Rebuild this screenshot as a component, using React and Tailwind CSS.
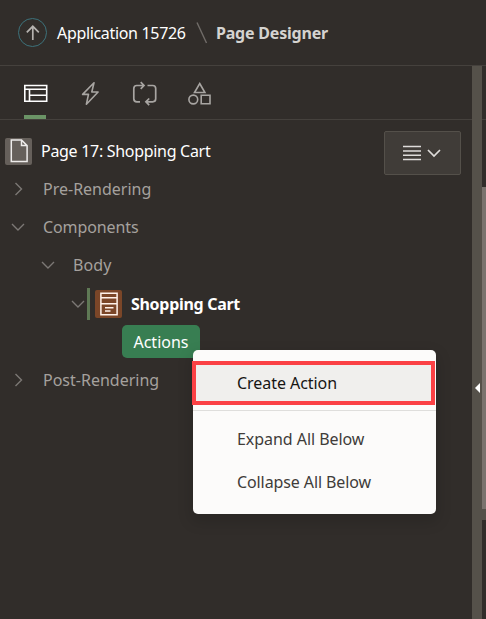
import React from 'react';

function Chevron({ open, className = '' }) {
  return (
    <svg width="16" height="16" viewBox="0 0 16 16" fill="none" stroke="currentColor" strokeWidth="1.4" className={`shrink-0 text-[#7c7875] ${className}`}>
      <path d={open ? 'M2 5l6 6 6-6' : 'M5.500 2l6 6-6 6'} />
    </svg>
  );
}

function Header() {
  return (
    <header className="flex h-[66px] shrink-0 items-center border-b border-[#45413d] pl-[18px]">
      <svg width="30" height="30" viewBox="0 0 30 30" fill="none" className="shrink-0">
        <circle cx="14.5" cy="14.5" r="14" stroke="#3d727b" />
        <path d="M14.800 22V8.300M8.800 14.300l6-6 6 6" stroke="#b5b2af" strokeWidth="1.700" />
      </svg>
      <span className="ml-[9px] w-[130px] tracking-[-0.33px] text-white">Application 15726</span>
      <svg width="12" height="22" viewBox="0 0 12 22" className="ml-[9px] shrink-0">
        <path d="M1 .5l9.500 20.500" stroke="#716d69" strokeWidth="1.4" />
      </svg>
      <span className="ml-[8px] font-bold tracking-[-0.2px] text-[#d5d3d0]">Page Designer</span>
    </header>
  );
}

function Tabs() {
  return (
    <nav className="relative flex h-[54px] shrink-0 items-center border-b border-[#45413d] pl-[23px] text-[#a8a5a2]">
      <svg width="26" height="26" viewBox="0 0 26 26" fill="none" stroke="#fff" strokeWidth="1.6">
        <path d="M1.800 5.500h21.900v15.800H1.800zM1.800 9.300h21.900M6.500 9.300v12M6.500 15.300h17.200" />
      </svg>
      <svg width="26" height="26" viewBox="0 0 26 26" fill="none" stroke="currentColor" strokeWidth="1.6" className="ml-[30px]">
        <path d="M15 2.800L3.600 14.400h5.900L7.400 24.200l11.700-12.200h-6.300L15 2.800z" strokeLinejoin="round" />
      </svg>
      <svg width="26" height="26" viewBox="0 0 26 26" fill="none" stroke="currentColor" strokeWidth="1.700" className="ml-[27px]">
        <path d="M8 21.800H4.800Q1.800 21.800 1.800 18.800V8.500Q1.800 5.500 4.800 5.500h6.700M8.700 2.200L12 5.500 8.700 8.800M15.500 5.500h5.200q3 0 3 3v10.300q0 3-3 3h-6.400M17.200 18.500l-3.300 3.300 3.300 3.300" />
      </svg>
      <svg width="26" height="26" viewBox="0 0 26 26" fill="none" stroke="currentColor" strokeWidth="1.600" className="ml-[29px]">
        <path d="M12.700 3.500l5.200 9H7.500zM14.200 15.300h8.800v8.500h-8.800z" />
        <circle cx="6.300" cy="19.500" r="4.400" />
      </svg>
      <span className="absolute bottom-0 left-[24px] h-[4px] w-[22px] bg-[#6b9466]" />
    </nav>
  );
}

function MenuButton() {
  return (
    <button className="mt-[11px] mr-[11px] flex h-[44px] w-[77px] shrink-0 items-center rounded-[2px] border border-[#54504a] bg-[#403c38] pl-[18px] text-[#dedcda]">
      <svg width="18" height="16" viewBox="0 0 18 16" stroke="currentColor" strokeWidth="1.500">
        <path d="M0 1.500h18M0 5.900h18M0 10.200h18M0 14.500h18" />
      </svg>
      <svg width="14" height="10" viewBox="0 0 14 10" fill="none" stroke="currentColor" strokeWidth="1.700" className="ml-[6px]">
        <path d="M1 2l6 6 6-6" />
      </svg>
    </button>
  );
}

function Tree() {
  return (
    <div className="flex-1 pt-[12px] text-[#a5a19e]">
      <div className="flex h-[38px] items-center pl-[5px] text-white">
        <span className="flex size-[27px] items-center justify-center rounded-[2px] bg-[#66605b]">
          <svg width="18" height="24" viewBox="0 0 18 24" fill="none" stroke="#eeeceb" strokeWidth="1.500">
            <path d="M1.300 1h10.200l5.600 5.600v15.900H1.300zM11.500 1v5.600h5.600" />
          </svg>
        </span>
        <span className="ml-[9px] tracking-[-0.3px]">Page 17: Shopping Cart</span>
      </div>
      <div className="flex h-[38px] items-center pl-[10px]">
        <Chevron /><span className="ml-[17px]">Pre-Rendering</span>
      </div>
      <div className="flex h-[38px] items-center pl-[10px]">
        <Chevron open /><span className="ml-[17px] tracking-[-0.1px]">Components</span>
      </div>
      <div className="flex h-[38px] items-center pl-[40px]">
        <Chevron open /><span className="ml-[17px] tracking-[0.1px]">Body</span>
      </div>
      <div className="flex h-[39px] items-center pl-[70px]">
        <Chevron open />
        <span className="ml-[1px] h-[32px] w-[3px] bg-[#5f7955]" />
        <span className="ml-[5px] flex h-[28px] w-[27px] items-center justify-center rounded-[2px] bg-[#7b4628]">
          <svg width="18" height="24" viewBox="0 0 18 24" fill="none" stroke="#fff1e9" strokeWidth="1.500">
            <path d="M.9 1.200h16.200v21.500H.9zM.9 5.800h16.200M.9 11.800h16.200M5 15.800h8.500M5 18.900h5.500" />
          </svg>
        </span>
        <span className="ml-[9px] font-bold tracking-[-0.3px] text-white">Shopping Cart</span>
      </div>
      <div className="flex h-[38px] items-start pl-[122px] pt-[2px]">
        <span className="flex h-[33px] w-[78px] items-center justify-center rounded-[5px] bg-[#387e52] pt-px text-white">Actions</span>
      </div>
      <div className="flex h-[38px] items-center pl-[10px]">
        <Chevron /><span className="ml-[17px]">Post-Rendering</span>
      </div>
    </div>
  );
}

function ContextMenu() {
  return (
    <div className="absolute left-[193px] top-[350px] flex h-[164px] w-[243px] flex-col rounded-[5px] bg-[#fcfbfa] text-[#403c39] shadow-[0_6px_14px_3px_rgba(0,0,0,0.12)]">
      <div className="-ml-px mt-[11px] flex h-[44px] w-[243px] shrink-0 items-center border-4 border-[#fb4145] bg-[#f0efed] pl-[41px] tracking-[-0.05px] text-[#161513]">Create Action</div>
      <div className="mt-[5px] h-px shrink-0 bg-[#dfdedc]" />
      <div className="mt-[6px] flex h-[43px] shrink-0 items-center pl-[44px] tracking-[-0.05px]">Expand All Below</div>
      <div className="flex h-[43px] shrink-0 items-center pl-[44px] tracking-[-0.1px]">Collapse All Below</div>
    </div>
  );
}

export default function App() {
  return (
    <div className="relative flex h-[619px] w-[486px] flex-col overflow-hidden whitespace-nowrap bg-[#312d2a] font-['Noto_Sans',sans-serif] text-[16px] leading-[24px]">
      <Header />
      <div className="flex min-h-0 flex-1">
        <main className="flex min-w-0 flex-1 flex-col">
          <Tabs />
          <div className="flex items-start">
            <Tree />
            <MenuButton />
          </div>
        </main>
        <div className="flex w-[10px] flex-col items-end bg-[#55514a] pt-[317px]">
          <svg width="7" height="10" viewBox="0 0 7 10" className="shrink-0"><path d="M5 0v10L0 5z" fill="#fff" /></svg>
        </div>
        <div className="flex w-[4px] flex-col">
          <div className="h-[54px] border-b border-[#45413d]" />
          <div className="h-[67px]" />
          <div className="h-[322px] bg-[#7a736e]" />
          <div className="h-[11px] bg-[#55514a]" />
        </div>
      </div>
      <ContextMenu />
    </div>
  );
}
